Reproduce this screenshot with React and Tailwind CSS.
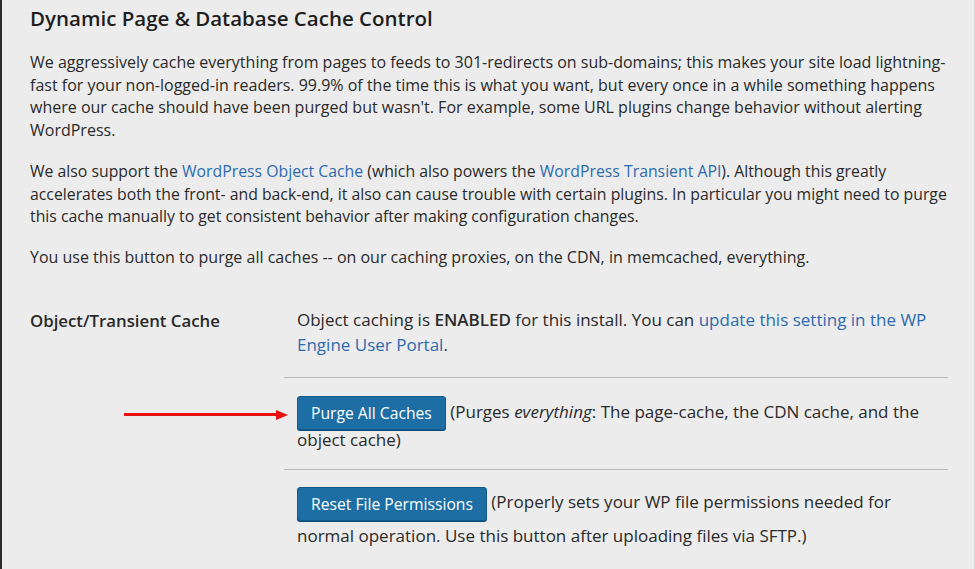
import React from 'react'

const Btn = ({ children }) => (
  <span className="inline-block align-middle my-[-4px] bg-[#1c6ea4] border border-[#0f5a8a] rounded-[3px] text-white text-[15.7px] leading-[32px] px-[13px] shadow-[0_1px_0_#0b4d78]">
    {children}
  </span>
)

export default function App() {
  return (
    <div className="w-[975px] h-[569px] overflow-hidden bg-[#ececec] border-l-2 border-[#2b2b2b] border-r border-r-[#d8d8d8] text-[#2a2a2a] font-['Open_Sans',sans-serif]">
      <div className="pl-[28px] pr-[26px] pt-[2px]">
        <h1 className="text-[20.5px] font-semibold text-[#1e1e1e] leading-[32px]">Dynamic Page &amp; Database Cache Control</h1>

        <p className="mt-[17px] text-[16px] leading-[22.7px]">
          We aggressively cache everything from pages to feeds to 301-redirects on sub-domains; this makes your site load lightning-fast for your non-logged-in readers. 99.9% of the time this is what you want, but every once in a while something happens where our cache should have been purged but wasn't. For example, some URL plugins change behavior without alerting WordPress.
        </p>

        <p className="mt-[18px] text-[15.8px] leading-[22.7px]">
          We also support the <a className="text-[#2c6bae]">WordPress Object Cache</a> (which also powers the <a className="text-[#2c6bae]">WordPress Transient API</a>). Although this greatly accelerates both the front- and back-end, it also can cause trouble with certain plugins. In particular you might need to purge this cache manually to get consistent behavior after making configuration changes.
        </p>

        <p className="mt-[18px] text-[16px] leading-[22.7px]">
          You use this button to purge all caches -- on our caching proxies, on the CDN, in memcached, everything.
        </p>

        <div className="mt-[27px] flex text-[17px]">
          <div className="w-[254px] shrink-0 pt-[12px] font-semibold text-[16.8px]">Object/Transient Cache</div>
          <div className="flex-1 flex flex-col">
            <div className="px-[13px] pt-[11px] pb-[20px] leading-[25px] border-b border-[#b9b9b9]">
              Object caching is <b className="font-semibold">ENABLED</b> for this install. You can <a className="text-[#2c6bae]">update this setting in the WP Engine User Portal</a>.
            </div>
            <div className="relative px-[13px] pt-[20px] pb-[15px] leading-[28px] border-b border-[#b9b9b9]">
              <div className="absolute left-[-160px] top-[32px] flex items-center">
                <div className="w-[152px] h-[3px] bg-[#e8100e]"></div>
                <svg width="12" height="10" viewBox="0 0 12 10"><path d="M0 0 L12 5 L0 10 Z" fill="#e8100e" /></svg>
              </div>
              <Btn>Purge All Caches</Btn> (Purges <i>everything</i>: The page-cache, the CDN cache, and the object cache)
            </div>
            <div className="px-[13px] pt-[15px] leading-[34px]">
              <Btn>Reset File Permissions</Btn> (Properly sets your WP file permissions needed for normal operation. Use this button after uploading files via SFTP.)
            </div>
          </div>
        </div>
      </div>
    </div>
  )
}
